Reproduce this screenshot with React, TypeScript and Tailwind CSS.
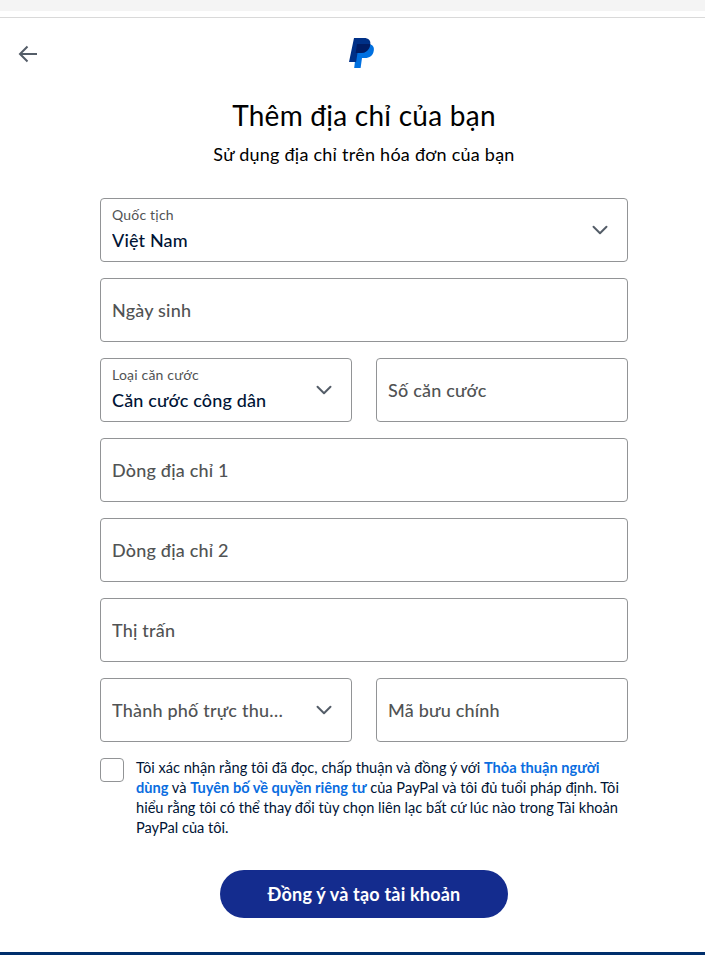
import { ChevronDown } from "lucide-react"

function Field({ label, value, select, className = "" }: { label: string; value?: string; select?: boolean; className?: string }) {
  return (
    <div className={`relative flex h-16 items-center rounded border border-[#929496] bg-white pl-[11px] ${select ? "pr-[60px]" : "pr-[11px]"} ${className}`}>
      {value ? (
        <div className="min-w-0 -mt-[2px]">
          <div className="text-[14px] leading-[18px] tracking-[0.2px] text-[#515354]">{label}</div>
          <div className="mt-[4px] truncate text-[18px] leading-[24px] tracking-[0.15px] font-medium text-[#001435]">{value}</div>
        </div>
      ) : (
        <div className="truncate text-[18px] leading-[24px] tracking-[0.2px] font-medium text-[#515354]">{label}</div>
      )}
      {select && <ChevronDown className="absolute right-[14px] top-[18px] h-[26px] w-[26px] text-[#545d68]" strokeWidth={1.8} />}
    </div>
  )
}

function PayPalMark() {
  return (
    <svg width="26" height="32" viewBox="0 0 26 32">
      <path d="M8 7h11c4 0 6.500 2.500 5.800 6.500C24 19 20.500 21 16 21h-3l-1.400 10H5.200z" fill="#0070e0" />
      <path d="M5 1h10c4.500 0 7 2.500 6.300 6.500C20.500 13 16.500 16 12 16H8.500l-1.400 9H0z" fill="#003087" />
      <path d="M8 7h13.300C20.500 13 16.500 16 12 16H6.700z" fill="#001c64" />
    </svg>
  )
}

export default function App() {
  return (
    <div className="flex h-[955px] w-[705px] flex-col overflow-hidden bg-white font-['Lato','Noto_Sans',sans-serif] text-[#001435]">
      <div className="h-[11px] bg-[#f4f4f4]" />
      <div className="mt-[6px] h-px bg-[#d9d9d9]" />
      <div className="relative flex flex-1 flex-col items-center pl-[23px]">
        <svg className="absolute left-[18px] top-[27px]" width="20" height="18" viewBox="0 0 20 18" fill="none" stroke="#545d68" strokeWidth="2">
          <path d="M19 9H2M9.500 1.500 2 9l7.500 7.500" />
        </svg>
        <div className="mt-[19px] mr-[4px]">
          <PayPalMark />
        </div>
        <h1 className="mt-[28px] text-[28px] leading-[36px] tracking-[0.25px] font-normal text-black">Thêm địa chỉ của bạn</h1>
        <p className="mt-[9px] text-[18px] leading-[24px] tracking-[0.25px] text-black">Sử dụng địa chỉ trên hóa đơn của bạn</p>
        <div className="mt-[32px] flex w-[528px] flex-col gap-4">
          <Field label="Quốc tịch" value="Việt Nam" select />
          <Field label="Ngày sinh" />
          <div className="grid grid-cols-2 gap-6">
            <Field label="Loại căn cước" value="Căn cước công dân" select />
            <Field label="Số căn cước" />
          </div>
          <Field label="Dòng địa chỉ 1" />
          <Field label="Dòng địa chỉ 2" />
          <Field label="Thị trấn" />
          <div className="grid grid-cols-2 gap-6">
            <Field label="Thành phố trực thuộc trung ương" select />
            <Field label="Mã bưu chính" />
          </div>
          <div className="flex gap-3">
            <div className="h-6 w-6 shrink-0 rounded border border-[#929496]" />
            <p className="pr-[8px] text-[14.6px] leading-[20px] text-[#001435]">
              Tôi xác nhận rằng tôi đã đọc, chấp thuận và đồng ý với{" "}
              <a className="font-bold text-[#0a6de0]">Thỏa thuận người dùng</a> và{" "}
              <a className="font-bold text-[#0a6de0]">Tuyên bố về quyền riêng tư</a> của PayPal và tôi đủ tuổi pháp định. Tôi hiểu rằng tôi có thể thay đổi tùy chọn liên lạc bất cứ lúc nào trong Tài khoản PayPal của tôi.
            </p>
          </div>
        </div>
        <button className="mt-[32px] h-12 w-[288px] rounded-full bg-[#142c8e] text-[18px] tracking-[0.2px] font-bold text-white">Đồng ý và tạo tài khoản</button>
      </div>
      <div className="h-[3px] bg-[#002f6c]" />
    </div>
  )
}
